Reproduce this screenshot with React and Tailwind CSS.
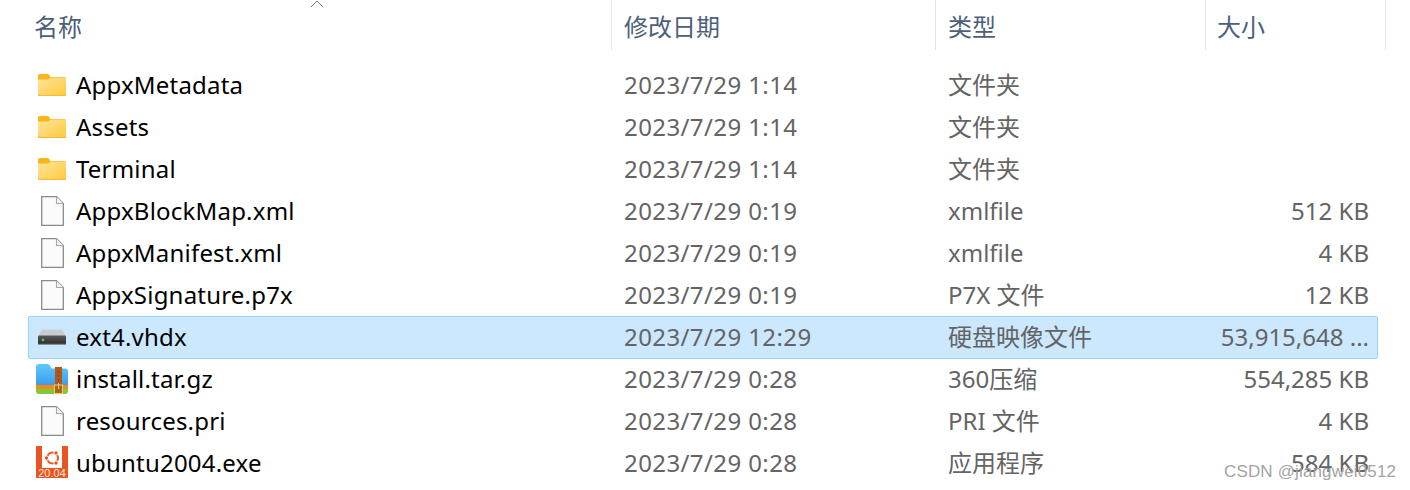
const FONT = "font-['Noto_Sans','Noto_Sans_CJK_SC',sans-serif]";

function FolderIcon() {
  return (
    <svg width="28" height="22" viewBox="0 0 28 22">
      <defs>
        <linearGradient id="fg" x1="0" y1="0" x2="1" y2="1">
          <stop offset="0" stopColor="#ffe49a" />
          <stop offset="1" stopColor="#fdc93f" />
        </linearGradient>
      </defs>
      <path d="M0 1.500A1.500 1.500 0 0 1 1.500 0H9c1.500 0 2.500 .8 3 2.500L12 3H26.500A1.500 1.500 0 0 1 28 4.500V8H0Z" fill="#fbb51c" />
      <path d="M0 5.500H9.500C11 5.500 11.500 4.700 12.500 3.500H26.500A1.500 1.500 0 0 1 28 5V20.500A1.500 1.500 0 0 1 26.500 22H1.500A1.500 1.500 0 0 1 0 20.500Z" fill="url(#fg)" />
      <path d="M0 20H.8C.8 20.800 1 21.200 1.500 21.200H26.500C27 21.200 27.200 20.800 27.200 20H28V20.500A1.500 1.500 0 0 1 26.500 22H1.500A1.500 1.500 0 0 1 0 20.500Z" fill="#f5b324" />
    </svg>
  );
}

function FileIcon() {
  return (
    <svg width="23" height="30" viewBox="0 0 23 30">
      <path d="M.7 .7H15.500L22.300 7.500V29.300H.7Z" fill="#fbfbfb" stroke="#8a8a8a" strokeWidth="1.300" />
      <path d="M15.500 .7V7.500H22.300" fill="#f2f2f2" stroke="#a8a8a8" strokeWidth="1.100" />
    </svg>
  );
}

function DiskIcon() {
  return (
    <svg width="28" height="16" viewBox="0 0 28 16">
      <defs>
        <linearGradient id="dg" x1="0" y1="0" x2="0" y2="1">
          <stop offset="0" stopColor="#5a5a5a" />
          <stop offset="1" stopColor="#2c2c2c" />
        </linearGradient>
      </defs>
      <path d="M4 0.500H24L28 7H0Z" fill="#c9cdd0" />
      <rect x="0" y="6.500" width="28" height="9" rx="1" fill="url(#dg)" />
      <rect x="0" y="14.800" width="28" height="1" fill="#8f8f8f" />
      <circle cx="5" cy="11" r="1.300" fill="#37e04a" />
    </svg>
  );
}

function ZipIcon() {
  return (
    <svg width="32" height="30" viewBox="0 0 32 30">
      <defs>
        <linearGradient id="zg" x1="0" y1="0" x2="0" y2="1">
          <stop offset="0" stopColor="#5fc8fb" />
          <stop offset="1" stopColor="#3a9cec" />
        </linearGradient>
      </defs>
      <path d="M0 3A3 3 0 0 1 3 0H11C13 0 14 1 15.500 4.500H29A3 3 0 0 1 32 7.500V22H0Z" fill="url(#zg)" />
      <rect x="0" y="21" width="32" height="4.500" fill="#f58a12" />
      <path d="M0 25H32V27A3 3 0 0 1 29 30H3A3 3 0 0 1 0 27Z" fill="#82c83c" />
      <rect x="19" y="3" width="7" height="27" fill="#b3581b" />
      <rect x="18.500" y="21" width="8" height="8.500" fill="#a4661f" stroke="#efc66c" strokeWidth="1.100" />
      <rect x="22" y="19" width="1.100" height="6" fill="#efc66c" />
      <circle cx="22.500" cy="8" r=".7" fill="#7c3d12" />
      <circle cx="22.500" cy="12" r=".7" fill="#7c3d12" />
      <circle cx="22.500" cy="16" r=".7" fill="#7c3d12" />
    </svg>
  );
}

function UbuntuIcon() {
  return (
    <div className="mb-[2px] flex h-8 w-8 flex-col items-center overflow-hidden bg-[#e95420]">
      <svg className="shrink-0" width="20" height="22" viewBox="0 0 20 22">
        <rect width="20" height="22" fill="#fff" />
        <circle cx="10.500" cy="12" r="5.500" fill="none" stroke="#e95420" strokeWidth="2" />
        <circle cx="14" cy="7" r="2.200" fill="#e95420" stroke="#fff" strokeWidth="1" />
        <circle cx="4.500" cy="12" r="2.200" fill="#e95420" stroke="#fff" strokeWidth="1" />
        <circle cx="14" cy="17" r="2.200" fill="#e95420" stroke="#fff" strokeWidth="1" />
      </svg>
      <span className="font-['Liberation_Sans',sans-serif] text-[11px] leading-[10px] text-[#ffe6dc]">20.04</span>
    </div>
  );
}

const rows = [
  ["AppxMetadata", "2023/7/29 1:14", "文件夹", "", "folder"],
  ["Assets", "2023/7/29 1:14", "文件夹", "", "folder"],
  ["Terminal", "2023/7/29 1:14", "文件夹", "", "folder"],
  ["AppxBlockMap.xml", "2023/7/29 0:19", "xmlfile", "512 KB", "file"],
  ["AppxManifest.xml", "2023/7/29 0:19", "xmlfile", "4 KB", "file"],
  ["AppxSignature.p7x", "2023/7/29 0:19", "P7X 文件", "12 KB", "file"],
  ["ext4.vhdx", "2023/7/29 12:29", "硬盘映像文件", "53,915,648 ...", "disk"],
  ["install.tar.gz", "2023/7/29 0:28", "360压缩", "554,285 KB", "zip"],
  ["resources.pri", "2023/7/29 0:28", "PRI 文件", "4 KB", "file"],
  ["ubuntu2004.exe", "2023/7/29 0:28", "应用程序", "584 KB", "ubuntu"],
];

const icons = {
  folder: <FolderIcon />,
  file: <FileIcon />,
  disk: <DiskIcon />,
  zip: <ZipIcon />,
  ubuntu: <UbuntuIcon />,
};

function Header({ label, className }) {
  return (
    <div className={`flex h-[50px] items-center border-r border-[#e5e5e5] pt-[4px] text-[24px] text-[#4c607a] ${className}`}>
      {label}
    </div>
  );
}

export default function App() {
  return (
    <div className={`relative h-[490px] w-[1410px] overflow-hidden bg-white ${FONT}`}>
      <div className="flex pl-[34px]">
        <Header label="名称" className="w-[578px]" />
        <Header label="修改日期" className="w-[324px] pl-[12px]" />
        <Header label="类型" className="w-[270px] pl-[12px]" />
        <Header label="大小" className="w-[180px] pl-[11px]" />
      </div>
      <svg className="absolute left-[310px] top-0" width="14" height="8" viewBox="0 0 14 8">
        <path d="M1 7L7 1L13 7" fill="none" stroke="#777" strokeWidth="1" />
      </svg>
      <div className="ml-[28px] mt-[14px] flex w-[1350px] flex-col">
        {rows.map(([name, date, type, size, icon]) => {
          const selected = icon === "disk";
          return (
            <div
              key={name}
              className={`flex items-center rounded-[2px] border text-[24px] ${selected ? "mb-[-1px] h-[43px] border-[#99d1ff] bg-[#cce8ff] pb-[1px]" : "h-[42px] border-transparent"}`}
            >
              <div className="flex w-[595px] items-center">
                <div className="flex w-[47px] shrink-0 justify-center pr-[1px]">{icons[icon]}</div>
                <span className="tracking-[0.2px] text-black">{name}</span>
              </div>
              <div className="w-[324px] tracking-[0.4px] text-[#646464]">{date}</div>
              <div className="w-[258px] text-[#646464]">{type}</div>
              <div className="w-[163px] text-right text-[#646464]">{size}</div>
            </div>
          );
        })}
      </div>
      <div className="absolute left-[1224px] top-[460px] font-['Liberation_Sans',sans-serif] text-[17px] leading-[24px] tracking-[0.15px] text-[#a3a3a3]">
        CSDN @jiangwei0512
      </div>
    </div>
  );
}
